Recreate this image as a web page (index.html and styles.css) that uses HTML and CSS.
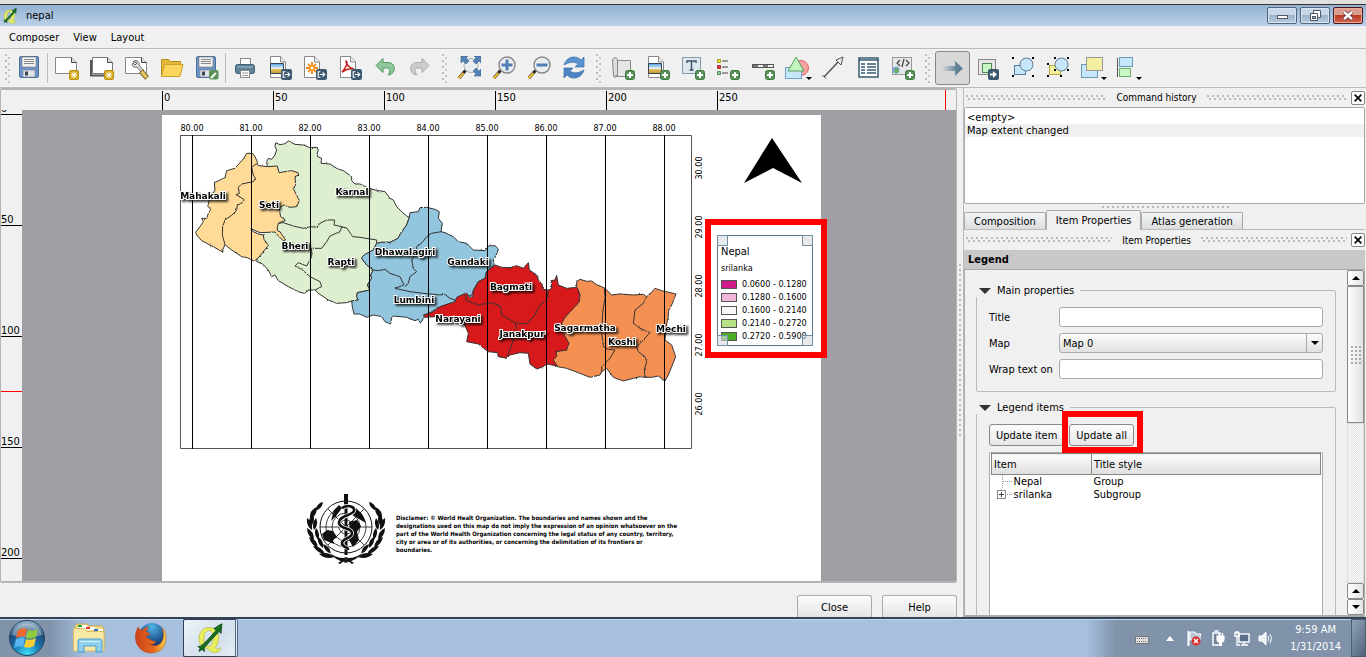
FILE: index.html
```html
<!DOCTYPE html>
<html lang="en">
<head>
<meta charset="utf-8">
<title>nepal</title>
<link rel="stylesheet" href="styles.css">
</head>
<body>
<svg class="defs" aria-hidden="true">
  <defs>
    <linearGradient id="gPhoto" x1="0" y1="0" x2="0" y2="1"><stop offset="0" stop-color="#4f9fe0"/><stop offset=".5" stop-color="#e8f3fb"/><stop offset=".55" stop-color="#e6c35a"/><stop offset="1" stop-color="#c49a36"/></linearGradient>
    <linearGradient id="gArrow" gradientUnits="userSpaceOnUse" x1="1" y1="0" x2="16" y2="0"><stop offset="0" stop-color="#5f8296" stop-opacity="0"/><stop offset="1" stop-color="#5f8296"/></linearGradient>
    <radialGradient id="gOrb" cx=".5" cy=".95" r=".9"><stop offset="0" stop-color="#3fe0f8"/><stop offset=".4" stop-color="#1a7db8"/><stop offset=".75" stop-color="#1d4a78"/><stop offset="1" stop-color="#8fb2c8"/></radialGradient>
    <radialGradient id="gFox" cx=".5" cy=".15" r=".7"><stop offset="0" stop-color="#4fb3e6"/><stop offset="1" stop-color="#123a78"/></radialGradient>
    <linearGradient id="gTail" x1="0" y1="0" x2="1" y2="0"><stop offset="0" stop-color="#c8421a"/><stop offset=".6" stop-color="#e8691e"/><stop offset="1" stop-color="#fbd24a"/></linearGradient>
    <symbol id="new" viewBox="0 0 10 10"><rect x=".5" y=".5" width="9" height="9" rx="1.5" fill="#d8ad1c" stroke="#b98f0b"/><path d="M5 1.8v6.4M1.8 5h6.4M2.7 2.7l4.6 4.6M7.3 2.7L2.7 7.3" stroke="#fff" stroke-width="1"/></symbol>
    <symbol id="add" viewBox="0 0 10 10"><rect x=".5" y=".5" width="9" height="9" rx="2" fill="#5a9158" stroke="#3f7840"/><path d="M5 2v6M2 5h6" stroke="#fff" stroke-width="2"/></symbol>
    <symbol id="exp" viewBox="0 0 10 10"><rect width="10" height="10" rx="2" fill="#3b5870"/><path d="M4 2.5H2v5h2M3.500 5h4M6 3l2 2-2 2" fill="none" stroke="#fff"/></symbol>
    <symbol id="floppy" viewBox="0 0 20 22"><rect x=".5" y=".5" width="19" height="21" rx="1.500" fill="#6e95c6" stroke="#4a6f9f"/><rect x="3" y="1" width="14" height="10" fill="#f2f2f2" stroke="#777" stroke-width=".6"/><path d="M5 3.500h10M5 5.500h10M5 7.500h10" stroke="#888"/><rect x="4" y="14" width="12" height="7" fill="#e4e4e4" stroke="#6b7e96" stroke-width=".6"/><rect x="6" y="15.500" width="3" height="4" fill="#345"/></symbol>
    <symbol id="doc" viewBox="0 0 17 22"><path d="M.5.500h10l5 5.500v15.500H.500z" fill="#fff" stroke="#888"/><path d="M10.500.500V6h5" fill="#eee" stroke="#888"/></symbol>
    <symbol id="glass" viewBox="0 0 24 24"><path d="M8.500 14.500L2 22" stroke="#222" stroke-width="3"/><path d="M6.500 17L1.500 22.500" stroke="#e9b63c" stroke-width="2.500"/><circle cx="15" cy="9" r="8" fill="#e9edf1" fill-opacity=".85" stroke="#888" stroke-width="1.400"/></symbol>
    <symbol id="grpx" viewBox="0 0 24 24"><g fill="#000"><path d="M1 1h2v2H1zM21 1h2v2h-2zM1 19h2v2H1zM21 19h2v2h-2z"/></g></symbol>
    <symbol id="q" viewBox="0 0 26 30"><path fill-rule="evenodd" d="M12 4C6 4 2 9 2 15c0 5 3 9 8 10 2 1 4 4 8 4 3 0 6-2 5-5-1 2-4 2-5 0 4-3 5-13 1-17-2-2-4-3-7-3zm0 3c4 0 4 5 4 8s-1 8-5 8-4-5-4-8 1-8 5-8z" fill="#e9ee5e" stroke="#b6bd3c" stroke-width=".8"/><path d="M2 28l1-3-2-2 3-.5L9 18 19 7l-2-2 8-5-1 10-2-2-10 11-5 5.500.5 3.500-2.500-2z" fill="#1a6f22" stroke="#0a4410" stroke-width=".8"/></symbol>
    <filter id="rough" x="-5%" y="-5%" width="110%" height="110%" color-interpolation-filters="sRGB"><feTurbulence type="fractalNoise" baseFrequency=".16" numOctaves="2" seed="4"/><feDisplacementMap in="SourceGraphic" scale="6" xChannelSelector="R" yChannelSelector="G"/></filter>
  </defs>
</svg>

<header class="titlebar">
  <svg class="app-icon" viewBox="0 0 26 30"><use href="#q"/></svg>
  <h1 class="win-title">nepal</h1>
  <div class="win-buttons">
    <button class="win-btn" aria-label="Minimize"><svg viewBox="0 0 28 15"><rect x="9.500" y="7.500" width="10" height="3" fill="#fff" stroke="#556"/></svg></button>
    <button class="win-btn" aria-label="Restore"><svg viewBox="0 0 28 15"><path d="M12.500 2.500h7v7h-7z" fill="#fff" stroke="#556"/><path d="M9.500 5.500h7v7h-7z" fill="#fff" stroke="#556"/><rect x="11.500" y="8.500" width="3" height="2" fill="#9bb" stroke="#556"/></svg></button>
    <button class="win-btn win-close" aria-label="Close window"><svg viewBox="0 0 28 15"><path d="M10 4l8 7M18 4l-8 7" stroke="#534" stroke-width="4"/><path d="M10 4l8 7M18 4l-8 7" stroke="#fff" stroke-width="2.400"/></svg></button>
  </div>
</header>

<nav class="menubar">
  <button>Composer</button><button>View</button><button>Layout</button>
</nav>

<div class="toolbar" role="toolbar">
  <i class="grip grip-first"></i>
  <button class="tool" aria-label="Save"><svg viewBox="0 0 24 24"><use href="#floppy" x="2" y="0" width="20" height="22"/></svg></button>
  <i class="sep"></i>
  <button class="tool" aria-label="New composition"><svg viewBox="0 0 24 24"><path d="M.5 1.500h16l5 5v11H.500z" fill="#fff" stroke="#888"/><path d="M16.500 1.500v5h5" fill="#ddd" stroke="#444"/><use href="#new" x="14" y="14" width="10" height="10"/></svg></button>
  <button class="tool" aria-label="Duplicate"><svg viewBox="0 0 24 24"><path d="M1 4v15.500h18" fill="none" stroke="#555" stroke-width="2"/><path d="M2.500 1.500h15l5 5v11h-20z" fill="#fff" stroke="#777"/><path d="M17.500 1.500v5h5" fill="#ddd" stroke="#444"/><use href="#new" x="14" y="14" width="10" height="10"/></svg></button>
  <button class="tool" aria-label="Composer manager"><svg viewBox="0 0 24 24"><path d="M.5 1.500h16l5 5v11H.500z" fill="#fff" stroke="#888"/><path d="M16.500 1.500v5h5" fill="#ddd" stroke="#444"/><path d="M8 6c2-3 7-1 6 3l5 6-2 2-5-6c-4 1-6-2-4-4l2 2 2-2z" fill="#ddd" stroke="#444" stroke-width=".8"/><path d="M16 15l6 7" stroke="#7a6420" stroke-width="5"/><path d="M16.500 15.500l5 6" stroke="#e8c568" stroke-width="3"/></svg></button>
  <button class="tool" aria-label="Load template"><svg viewBox="0 0 24 24"><path d="M1.500 20.500v-17h7l2 2h10v4" fill="#e3b83a" stroke="#b88f1c"/><path d="M1.500 20.500l3-12h18.500l-3 12z" fill="#fbd65c" stroke="#c9a12b"/></svg></button>
  <button class="tool" aria-label="Save template"><svg viewBox="0 0 24 24"><use href="#floppy" x="1" y="0" width="20" height="22"/><rect x="14" y="14" width="9.500" height="9.500" rx="2" fill="#5a9158"/><path d="M16 22l5-5" stroke="#fff" stroke-width="2"/></svg></button>
  <i class="sep"></i>
  <button class="tool" aria-label="Print"><svg viewBox="0 0 24 24"><rect x="7.500" y="2.500" width="10" height="7" fill="#fff" stroke="#888"/><rect x="2.500" y="8.500" width="19" height="9" rx="2" fill="#5f8196" stroke="#3f6076"/><path d="M4 11h16" stroke="#a6bac6"/><rect x="7.500" y="14.500" width="9" height="7" fill="#fff" stroke="#888"/><path d="M9 17h6M9 19.500h6" stroke="#999"/></svg></button>
  <button class="tool" aria-label="Export as image"><svg viewBox="0 0 24 24"><use href="#doc" x="2" y="0" width="17" height="22"/><path d="M2.500 7.500h13v10h-13z" fill="url(#gPhoto)" stroke="#345"/><use href="#exp" x="13" y="13" width="11" height="11"/></svg></button>
  <button class="tool" aria-label="Export as SVG"><svg viewBox="0 0 24 24"><use href="#doc" x="1" y="0" width="17" height="22"/><path d="M9 6v12M3 12h12M5 8l8 8M13 8l-8 8" stroke="#f0901e" stroke-width="2"/><circle cx="9" cy="12" r="1.500" fill="#fff"/><use href="#exp" x="13" y="13" width="11" height="11"/></svg></button>
  <button class="tool" aria-label="Export as PDF"><svg viewBox="0 0 24 24"><use href="#doc" x="2" y="0" width="17" height="22"/><path d="M8 5c2 0 1 6-4 11 3-2 7-4 12-3-5-1-8-5-8-8z" fill="none" stroke="#c8201e" stroke-width="1.600"/><use href="#exp" x="13" y="13" width="11" height="11"/></svg></button>
  <button class="tool" aria-label="Undo"><svg viewBox="0 0 24 24"><path d="M3 9.500l7-7v4h5c5 0 7 4 6 8-1 3-3 4-6 4.500 2-2 3-7-1-7h-4v4.500z" fill="#8fc79a" stroke="#4c9a5e"/></svg></button>
  <button class="tool" aria-label="Redo"><svg viewBox="0 0 24 24"><path d="M21 9.500l-7-7v4H9c-5 0-7 4-6 8 1 3 3 4 6 4.500-2-2-3-7 1-7h4v4.500z" fill="#ccc" stroke="#aaa"/></svg></button>
  <i class="grip"></i>
  <button class="tool" aria-label="Zoom full"><svg viewBox="0 0 24 24"><path d="M8.500 14.500L2 22" stroke="#222" stroke-width="3"/><path d="M6.500 17L1.500 22.500" stroke="#e9b63c" stroke-width="2.500"/><circle cx="14" cy="9.500" r="7" fill="#e9edf1" stroke="#aaa"/><g fill="#5482b4" stroke="#39618f" stroke-width=".6"><path d="M4 0h7L9 2l3 3-3 3-3-3-2 2z"/><path d="M24 0v7l-2-2-3 3-3-3 3-3-2-2z"/><path d="M24 20h-7l2-2-3-3 3-3 3 3 2-2z"/></g></svg></button>
  <button class="tool" aria-label="Zoom in"><svg viewBox="0 0 24 24"><use href="#glass"/><path d="M15 3.500v11M9.500 9h11" stroke="#4f7fb5" stroke-width="3"/></svg></button>
  <button class="tool" aria-label="Zoom out"><svg viewBox="0 0 24 24"><use href="#glass"/><path d="M9.500 9h11" stroke="#4f7fb5" stroke-width="3"/></svg></button>
  <button class="tool" aria-label="Refresh"><svg viewBox="0 0 24 24"><path d="M2 9C4 3 8 1 12 1c3 0 5 1 7 3l3-3v10H13l3-3c-4-3-9-2-14 1z" fill="#5b92cf" stroke="#356ba8" stroke-width=".7"/><path d="M22 14c-2 6-6 8-10 8-3 0-5-1-7-3l-3 3V12h9l-3 3c4 3 9 2 14-1z" fill="#4d84c4" stroke="#356ba8" stroke-width=".7"/></svg></button>
  <i class="grip"></i>
  <button class="tool" aria-label="Add map"><svg viewBox="0 0 24 24"><path d="M5.500 4.500h14v16h-15" fill="#e6e6e6" stroke="#888"/><path d="M1.500 4c0-3 5-3 5 0v15.500h-2v1.500c-1 1-2 0-2-1z" fill="#ddd" stroke="#888"/><use href="#add" x="14" y="14" width="10" height="10"/></svg></button>
  <button class="tool" aria-label="Add image"><svg viewBox="0 0 24 24"><use href="#doc" x="2" y="0" width="17" height="22"/><path d="M2.500 7.500h13v10h-13z" fill="url(#gPhoto)" stroke="#345"/><use href="#add" x="14" y="14" width="10" height="10"/></svg></button>
  <button class="tool" aria-label="Add label"><svg viewBox="0 0 24 24"><rect x="1.500" y="1.500" width="18" height="16" fill="#dfe8ef" stroke="#8a9aa6"/><path d="M6 7V5h9v2M10.500 5v9M8.500 14h4" fill="none" stroke="#3b5268" stroke-width="1.500"/><use href="#add" x="14" y="14" width="10" height="10"/></svg></button>
  <button class="tool" aria-label="Add legend"><svg viewBox="0 0 24 24"><path d="M6 5h6M6 11h6M6 17h6" stroke="#999" stroke-width="2"/><path d="M1.500 3.500h3v3h-3z" fill="#f1e62e" stroke="#a89b1a"/><path d="M1.500 9.500h3v3h-3z" fill="#e03838" stroke="#a33"/><path d="M1.500 15.500h3v3h-3z" fill="#8bc98b" stroke="#5a9158"/><use href="#add" x="14" y="14" width="10" height="10"/></svg></button>
  <button class="tool" aria-label="Add scalebar"><svg viewBox="0 0 24 24"><rect x="1.500" y="8.500" width="21" height="3" fill="#eee" stroke="#555"/><path d="M2 10h5M12 10h5" stroke="#777" stroke-width="2"/><use href="#add" x="14" y="14" width="10" height="10"/></svg></button>
  <button class="tool" aria-label="Add basic shape"><svg viewBox="0 0 28 24"><circle cx="17" cy="12" r="7.500" fill="#f7a3a3" stroke="#d66"/><rect x="1.500" y="11.500" width="16" height="11" fill="#c6e6fa" stroke="#6aa3cc"/><path d="M12 1l8 14H4z" fill="#c3f5c3" stroke="#5a9c5a"/><path d="M22 21h6l-3 3z"/></svg></button>
  <button class="tool" aria-label="Add arrow"><svg viewBox="0 0 24 24"><path d="M3 21L18 5" stroke="#555" stroke-width="1.400"/><path d="M22 1l-2 8-5-5z" fill="#eee" stroke="#555"/><path d="M1.500 19l3.500 3.500" stroke="#555"/></svg></button>
  <button class="tool" aria-label="Add attribute table"><svg viewBox="0 0 24 24"><rect x="3" y="2" width="19" height="19" fill="#fff" stroke="#355a70" stroke-width="1.500"/><path d="M3 4h19M5 8h4M11 8h9M5 11h4M11 11h9M5 14h4M11 14h9M5 17h4M11 17h9" stroke="#355a70" stroke-width="1.500"/></svg></button>
  <button class="tool" aria-label="Add HTML frame"><svg viewBox="0 0 24 24"><rect x="1.500" y="1.500" width="19" height="17" fill="#e4e8ea" stroke="#999"/><path d="M9 4L6 7l3 3M15 4l3 3-3 3M13 3l-2 8" fill="none" stroke="#444" stroke-width="1.200"/><circle cx="5" cy="14" r="3.500" fill="#78a8d8"/><path d="M3 13l4-1 1 3-3 3z" fill="#6fae5a"/><use href="#add" x="14" y="14" width="10" height="10"/></svg></button>
  <i class="grip grip-wide"></i>
  <button class="tool tool-on" aria-label="Select item"><svg viewBox="0 0 24 24"><path d="M2 10h12V5l8 7.500-8 7.500v-5H2z" fill="url(#gArrow)"/></svg></button>
  <button class="tool" aria-label="Move content"><svg viewBox="0 0 24 24"><rect x="2.500" y="3.500" width="17" height="15" fill="#e6e6e6" stroke="#888"/><rect x="6.500" y="7.500" width="9" height="9" fill="#c8f7c8" stroke="#4b8b4b"/><rect x="12" y="13" width="11" height="11" rx="2" fill="#3b5870"/><path d="M14 17.500h3v-2.500l4 3.500-4 3.500v-2.500h-3z" fill="#fff"/></svg></button>
  <button class="tool" aria-label="Group"><svg viewBox="0 0 24 24"><use href="#grpx"/><rect x="3.500" y="9.500" width="11" height="9" fill="#c6e6fa" stroke="#5d7c95"/><circle cx="15.500" cy="8.500" r="6.500" fill="#c6e6fa" stroke="#5d7c95"/></svg></button>
  <button class="tool" aria-label="Ungroup"><svg viewBox="0 0 24 24"><path d="M8 1h2v2H8zM21 1h2v2h-2zM21 13h2v2h-2zM1 7h2v2H1zM1 19h2v2H1zM14 19h2v2h-2z"/><rect x="3.500" y="9.500" width="11" height="9" fill="#f2f0a0" stroke="#b6a83c"/><circle cx="15.500" cy="8.500" r="6.500" fill="#c6e6fa" stroke="#5d7c95"/><path d="M8 13h2v2H8z"/></svg></button>
  <button class="tool" aria-label="Raise item"><svg viewBox="0 0 28 24"><rect x="2.500" y="8.500" width="16" height="13" fill="#c6e6fa" stroke="#6a9ab8"/><rect x="7.500" y="1.500" width="16" height="13" fill="#f2f0a0" stroke="#999"/><path d="M22 21h6l-3 3z"/></svg></button>
  <button class="tool" aria-label="Align items"><svg viewBox="0 0 28 24"><path d="M3.500 2v19" stroke="#555"/><rect x="5.500" y="1.500" width="13" height="9" fill="#c6e6fa" stroke="#6a9ab8"/><rect x="5.500" y="12.500" width="11" height="8" fill="#c8f7c8" stroke="#6ab06a"/><path d="M22 21h6l-3 3z"/></svg></button>
</div>

<main class="main">
  <section class="left">
    <div class="view">
      <div class="ruler-h">
        <span>0</span><span>50</span><span>100</span><span>150</span><span>200</span><span>250</span>
        <i class="mark-h"></i>
      </div>
      <div class="ruler-v">
        <span class="v-first">0</span><span>50</span><span>100</span><span>150</span><span>200</span>
        <i class="mark-v"></i>
      </div>
      <div class="canvas">
        <div class="paper">
          <svg class="map" viewBox="162 115 659 466">
            <g transform="translate(160 110) scale(.33333)" stroke="#333" stroke-width="3" stroke-linejoin="round" filter="url(#rough)">
              <path fill="#deefcf" d="M322 170L320 155 325 145 335 148 345 135 350 120 345 110 347 98 360 104 375 101 385 93 405 103 430 105 450 113 470 112 475 120 471 132 473 140 485 145 483 160 510 162 530 175 550 182 568 195 575 200 575 212 585 222 600 222 620 232 645 240 675 245 690 265 700 270 710 290 725 305 740 318 748 322 740 345 722 370 714 385 690 397 665 397 650 400 640 420 612 435 605 445 620 465 640 480 632 495 635 505 622 525 630 540 592 548 590 560 595 570 575 573 560 578 530 580 505 570 475 550 465 540 447 540 433 550 415 545 385 530 355 512 345 495 335 500 325 480 308 462 290 455 300 400 345 300 340 200z"/>
              <path fill="#ffdb97" d="M250 148L260 130 278 130 285 140 293 158 290 163 297 167 322 170 352 168 357 188 395 182 414 188 416 195 405 200 407 225 400 235 412 260 418 272 410 290 390 292 372 285 360 292 358 300 362 320 376 330 355 340 352 352 352 362 360 365 368 378 377 390 370 392 355 378 345 366 300 368 272 356 280 365 295 372 310 375 312 388 325 406 300 438 283 454 262 443 245 440 215 420 195 404 188 420 189 427 160 410 140 400 125 392 110 375 107 367 120 350 130 335 125 325 140 325 145 310 152 298 143 288 148 270 165 240 163 218 195 203 200 182 225 175 245 152z"/>
              <path fill="none" d="M293 158L275 172 280 195 286 205 280 215 245 222 235 232 238 250 228 254 252 268 245 280 232 285 230 300 220 312 195 330 188 350 187 375 195 404M355 340L370 338 400 348 430 355 452 350 470 352 480 340 500 330 524 330 522 345 545 350 560 354 578 380 600 382 650 390 650 400M545 350L540 365 510 378 500 395 485 415 455 415 455 440 440 468 425 462 415 458 405 468 425 478 450 500 480 515 485 530 465 540"/>
              <path fill="#92c5de" d="M748 322L750 308 775 305 780 293 800 292 825 298 838 305 835 325 847 340 843 365 855 368 880 380 895 395 920 400 940 420 975 422 985 408 1005 407 1015 417 1008 438 1000 450 1002 465 995 472 980 485 975 505 955 515 940 540 935 558 910 555 885 575 830 595 800 615 790 625 782 640 775 628 765 632 740 622 700 618 695 622 692 642 675 635 665 620 640 615 620 622 600 612 582 612 577 590 575 573 595 570 590 560 592 548 630 540 622 525 635 505 632 495 640 480 620 465 605 445 612 435 640 420 650 400 665 397 690 397 714 385 722 370 740 345z"/>
              <path fill="none" d="M843 365L815 370 800 380 785 400 770 410 770 430 755 450 760 475 770 485 750 500 745 520 735 530M640 480L655 482 675 478 690 490 720 500 732 525 705 535 750 545 790 550 840 555 855 553 870 565 885 570"/>
            </g>
            <g transform="translate(420 180) scale(.33333)" stroke="#333" stroke-width="3" stroke-linejoin="round" filter="url(#rough)">
              <path fill="#f59053" d="M470 322L470 305 480 298 500 304 515 303 530 314 545 320 555 325 575 345 600 342 640 345 670 343 680 350 692 340 705 325 725 332 768 342 755 375 745 395 745 410 738 440 735 480 755 495 767 530 755 560 745 585 735 603 715 588 695 592 675 592 660 590 640 595 610 603 580 592 560 565 545 575 540 585 510 592 480 580 440 565 412 560 395 540 380 460 440 360z"/>
              <path fill="none" d="M553 325L555 350 548 400 545 460 550 500 565 508 585 510 570 535 545 560 545 577M680 350L670 370 645 390 640 430 660 445 690 458 665 485 650 500 655 515 675 530 680 545 673 570 675 592"/>
              <path fill="#d7191c" d="M10 405L40 395 60 380 105 365 110 352 140 338 145 350 158 352 160 332 175 305 195 295 200 275 215 262 225 255 245 262 270 263 290 257 310 265 325 248 328 270 350 285 355 300 365 310 370 328 385 330 395 325 393 302 405 300 410 287 415 315 440 325 470 322 475 330 480 345 478 365 460 385 435 412 425 430 430 460 447 490 443 500 440 510 408 515 410 530 400 540 412 558 380 552 370 560 350 567 330 552 325 520 300 518 270 525 260 535 235 530 232 518 205 515 175 492 140 485 145 460 130 425 105 420 45 410 15 412z"/>
              <path fill="none" d="M135 345L140 362 175 375 215 368 240 378 245 405 285 428 320 432 345 405 360 375 380 360 385 330M285 428L290 445 270 465 280 480 260 535"/>
            </g>
            <path class="frame" d="M180 135.500H691.500V448.500H180.500V135.500"/>
            <path class="grid" d="M192.500 135V449M251.500 135V449M310.500 135V449M369.500 135V449M428.500 135V449M487.500 135V449M546.500 135V449M605.500 135V449M664.500 135V449"/>
            <g class="ticks">
              <text x="192" y="131">80.00</text><text x="251" y="131">81.00</text><text x="310" y="131">82.00</text><text x="369" y="131">83.00</text><text x="428" y="131">84.00</text><text x="487" y="131">85.00</text><text x="546" y="131">86.00</text><text x="605" y="131">87.00</text><text x="664" y="131">88.00</text>
              <text transform="translate(702 168) rotate(-90)">30.00</text><text transform="translate(702 227) rotate(-90)">29.00</text><text transform="translate(702 286) rotate(-90)">28.00</text><text transform="translate(702 345) rotate(-90)">27.00</text><text transform="translate(702 404) rotate(-90)">26.00</text>
            </g>
            <g class="names">
              <text x="203" y="199">Mahakali</text><text x="269" y="208">Seti</text><text x="352" y="195">Karnal</text><text x="295" y="249">Bheri</text><text x="341" y="265">Rapti</text><text x="405" y="255">Dhawalagiri</text><text x="468" y="265">Gandaki</text><text x="414" y="303">Lumbini</text><text x="511" y="290">Bagmati</text><text x="458" y="322">Narayani</text><text x="522" y="337">Janakpur</text><text x="585" y="331">Sagarmatha</text><text x="622" y="345">Koshi</text><text x="671" y="332">Mechi</text>
            </g>
            <path d="M772 138L802 183 773 168 744 183z"/>
            <g transform="translate(346 528)">
              <g fill="none" stroke="#111"><circle r="26" cx="0" cy="-1"/><circle r="20" cy="-1" stroke-width=".8"/><circle r="14" cy="-1" stroke-width=".8"/><circle r="7" cy="-1" stroke-width=".8"/><path d="M-26-1H26M-18-19L18 17M18-19L-18 17" stroke-width=".8"/></g>
              <path d="M-24 6l5-4 6 1 4 6-4 3 1 4-5-2-5-2zM3-6l8-2 4 6-4 6 2 8-6 7-4-7 1-8zM10-20l6 6 4 9-7-4-6-4zM-12-18l5-5 3 3-6 8-5 5z" fill="#111"/>
              <path d="M0-34V27" stroke="#111" stroke-width="3"/><path d="M0-34V-24" stroke="#111" stroke-width="4"/>
              <path d="M-4-20c7-4 13-1 12 3s-16 5-15 12 13 4 13 10-10 5-10 10 6 3 6 7" fill="none" stroke="#fff" stroke-width="4"/>
              <path d="M-4-20c7-4 13-1 12 3s-16 5-15 12 13 4 13 10-10 5-10 10 6 3 6 7" fill="none" stroke="#111" stroke-width="2.600"/>
              <g id="laurel" fill="#111"><path d="M-23-26q-6 1-8 9 7-2 8-9zM-29-21q-8 3-7 12 7-3 7-12zM-33-14q-6 5-3 13 6-5 3-13zM-39-10q-1 8 5 12 1-8-5-12zM-30-10q-5 5-2 12 5-5 2-12zM-39 0q0 8 7 12 0-9-7-12zM-30 0q-3 6 2 12 3-7-2-12zM-37 9q2 8 9 11-1-9-9-11zM-28 9q-1 7 5 11 1-8-5-11zM-33 18q4 7 12 8-4-8-12-8zM-23 16q1 7 8 10-1-8-8-10zM-27 26q7 6 15 3-6-6-15-3zM-17 24q6 6 15 6l4 5-3-1q-9-1-16-10zM-8 35l9-6 1 1-8 6z"/></g>
              <use href="#laurel" transform="scale(-1 1)"/>
            </g>
          </svg>
          <p class="disclaimer">Disclamer: © World Healt Organization. The boundaries and names shown and the<br>designations used on this map do not imply the expression of an opinion whatsoever on the<br>part of the World Health Organization concerning the legal status of any country, territory,<br>city or area or of its authorities, or concerning the delimitation of its frontiers or<br>boundaries.</p>
          <div class="legend-mark">
            <div class="legend">
              <div class="lg-title">Nepal</div>
              <div class="lg-sub">srilanka</div>
              <ul>
                <li><i class="c1"></i>0.0600 - 0.1280</li>
                <li><i class="c2"></i>0.1280 - 0.1600</li>
                <li><i class="c3"></i>0.1600 - 0.2140</li>
                <li><i class="c4"></i>0.2140 - 0.2720</li>
                <li><i class="c5"></i>0.2720 - 0.5900</li>
              </ul>
              <b class="handle tl"></b><b class="handle tr"></b><b class="handle bl"></b><b class="handle br"></b>
            </div>
          </div>
        </div>
      </div>
    </div>
    <div class="footer"><button class="push">Close</button><button class="push">Help</button></div>
  </section>

  <div class="split"></div>

  <aside class="dock">
    <div class="dock-title"><i></i><span>Command history</span><i></i><button class="x" aria-label="Close command history"><svg viewBox="0 0 12 12"><path d="M2 2l8 8M10 2l-8 8" stroke="#000" stroke-width="2"/></svg></button></div>
    <ul class="history"><li>&lt;empty&gt;</li><li class="sel">Map extent changed</li></ul>
    <div class="split-h"><i></i></div>
    <div class="tabs" role="tablist"><button role="tab">Composition</button><button role="tab" class="tab-on">Item Properties</button><button role="tab">Atlas generation</button></div>
    <div class="dock-title"><i></i><span>Item Properties</span><i></i><button class="x" aria-label="Close item properties"><svg viewBox="0 0 12 12"><path d="M2 2l8 8M10 2l-8 8" stroke="#000" stroke-width="2"/></svg></button></div>
    <h2 class="section">Legend</h2>
    <div class="scroll">
      <div class="content">
        <fieldset>
          <legend><i class="tri"></i>Main properties</legend>
          <div class="form">
            <label for="title">Title</label><input id="title" type="text">
            <label for="mapsel">Map</label><div class="select"><select id="mapsel"><option>Map 0</option></select></div>
            <label for="wrap">Wrap text on</label><input id="wrap" type="text">
          </div>
        </fieldset>
        <fieldset class="items">
          <legend><i class="tri"></i>Legend items</legend>
          <div class="btns"><button class="small">Update item</button><div class="marked"><button class="small">Update all</button></div></div>
          <div class="tree">
            <table>
              <thead><tr><th>Item</th><th>Title style</th></tr></thead>
              <tbody><tr><td><svg class="node" viewBox="0 0 17 13"><path d="M6.500 0V13M7 6.500h10" stroke="#999" stroke-dasharray="1 1"/></svg>Nepal</td><td>Group</td></tr>
              <tr><td><svg class="node" viewBox="0 0 17 13"><path d="M11 6.500h6" stroke="#999" stroke-dasharray="1 1"/><rect x="1.500" y="2.500" width="8" height="8" fill="#fff" stroke="#888"/><path d="M3 6.500h5M5.500 4v5" stroke="#444"/></svg>srilanka</td><td>Subgroup</td></tr></tbody>
            </table>
          </div>
        </fieldset>
      </div>
      <div class="bar">
        <button aria-label="Scroll up"><svg viewBox="0 0 8 4"><path d="M4 0l4 4H0z"/></svg></button>
        <div class="thumb"><i></i></div>
        <div class="track"></div>
        <button aria-label="Page up"><svg viewBox="0 0 8 4"><path d="M4 0l4 4H0z"/></svg></button>
        <button aria-label="Scroll down"><svg viewBox="0 0 8 4"><path d="M4 4l4-4H0z"/></svg></button>
      </div>
    </div>
  </aside>
</main>

<footer class="taskbar">
  <button class="task" aria-label="Start"><svg class="orb" viewBox="0 0 38 38"><circle cx="19" cy="19" r="17.500" fill="url(#gOrb)" stroke="#24425e"/><path d="M4 16a15.500 15.500 0 0130 0q-14 5-30 0z" fill="#fff" opacity=".35"/><path d="M10 11q5-3 9-1l-2 8q-4-2-9 1z" fill="#ee6a2c"/><path d="M20 11q5 2 10-1l-2 8q-5 3-10 1z" fill="#8fcb3a"/><path d="M8 20q5-3 9-1l-2 9q-4-2-9 1z" fill="#5ab4ee"/><path d="M18 20q5 2 10-1l-2 8q-5 3-10 1z" fill="#fbcf3a"/></svg></button>
  <button class="task" aria-label="Explorer"><svg class="fold" viewBox="0 0 34 32"><path d="M3 4l2-2h10l2 2h13l2 3v21H3z" fill="#f3dd8c" stroke="#c9a94e"/><path d="M6 3h9v4H6z" fill="#fff"/><path d="M6 3h4v2H6z" fill="#2ca02c"/><path d="M14 5h9v3h-9z" fill="#fff"/><path d="M14 5h4v2h-4z" fill="#d33"/><path d="M22 7h9v3h-9z" fill="#fff"/><path d="M22 7h4v2h-4z" fill="#27c"/><path d="M1.500 6.500h11l2 3h17.500v19.500H1.500z" fill="#f9e9a6" stroke="#d8bc66"/><path d="M6 30V19q0-2 2-2h20q2 0 2 2v11h-6v-6H12v6z" fill="#8fd0ee" stroke="#4d9cc8"/><path d="M8 19.500h20" stroke="#d8f2fc"/></svg></button>
  <button class="task" aria-label="Firefox"><svg class="fox" viewBox="0 0 32 32"><circle cx="17" cy="14" r="13" fill="url(#gFox)"/><path d="M3 5Q-1 12 1 20C4 28 10 31 16 31c9 0 15-6 15-15 0-5-1-8-4-10 2 5 2 9 0 13-2 5-9 6-13 3 3 1 6 0 7-3-2 1-3 0-5-1-3-2-5-2-5-4 0-1 2-1 4-1 0-2-2-3-4-3 0-2 1-3 3-5-3 0-5 1-6 3H6Q4 7 3 5z" fill="url(#gTail)" stroke="#b8431a" stroke-width=".5"/></svg></button>
  <button class="task task-on" aria-label="QGIS"><svg class="qg" viewBox="0 0 26 30"><use href="#q"/></svg></button>
  <div class="tray">
    <svg class="t-kb" viewBox="0 0 16 16"><path d="M3 4q4-4 6-2t4-1" fill="none" stroke="#999"/><rect x="1.500" y="6.500" width="13" height="7" fill="#ddd" stroke="#777"/><path d="M3 8.500h10M3 11.500h10" stroke="#777" stroke-dasharray="1 1"/></svg>
    <svg class="t-up" viewBox="0 0 8 5"><path d="M4 0l4 5H0z" fill="#fff"/></svg>
    <svg viewBox="0 0 16 16"><path d="M2.500 1v15" stroke="#fff" stroke-width="2"/><path d="M4 2h5l1 2h5l-1 3v3H4z" fill="#b8c6d8" stroke="#fff"/><circle cx="10" cy="11" r="4.500" fill="#d9302c"/><path d="M8 9l4 4M12 9l-4 4" stroke="#fff" stroke-width="1.500"/></svg>
    <svg viewBox="0 0 16 16"><path d="M3 3h7v12H3zM4.500 1h4" fill="#71849d" stroke="#fff" stroke-width="1.500"/><path d="M7 6h7v3q0 3-2.500 3v4h-2v-4Q7 12 7 9zM9 3v3M12.500 3v3" fill="#fff" stroke="#fff" stroke-width="1.200"/></svg>
    <svg viewBox="0 0 16 16"><rect x="5" y="4" width="10" height="8" fill="#5b6f8a" stroke="#fff" stroke-width="1.400"/><path d="M7 15h7M10 12v3M3 6v9h3M1 3h4v3H1zM2 1v2M4 1v2" fill="none" stroke="#fff" stroke-width="1.300"/></svg>
    <svg viewBox="0 0 16 16"><path d="M1 6h3l4-4v13l-4-4H1z" fill="#eef2f7" stroke="#fff"/><path d="M10 6q1.500 2.500 0 5M12 4q3 4.500 0 9" fill="none" stroke="#fff"/></svg>
    <div class="clock"><time>9:59 AM</time><time>1/31/2014</time></div>
    <button class="desk" aria-label="Show desktop"></button>
  </div>
</footer>
</body>
</html>
```
FILE: styles.css
```css
* { box-sizing: border-box; }
html, body { height: 100%; }
body {
  margin: 0;
  display: flex;
  flex-direction: column;
  overflow: hidden;
  background: #f0f0f0;
  border-top: 4px solid #e0e0de;
  color: #000;
  font: 11px/13px "DejaVu Sans Condensed", "DejaVu Sans", sans-serif;
}
button, input, select { font: inherit; color: inherit; margin: 0; }
button { padding: 0; border: 0; background: none; }
ul { list-style: none; margin: 0; padding: 0; }
h1, h2, p { margin: 0; font: inherit; }
svg { display: block; }
.defs { position: absolute; width: 0; height: 0; }

.titlebar {
  flex: none;
  display: flex;
  align-items: center;
  height: 22px;
  padding: 0 3px;
  border-top: 1px solid #333;
  background: linear-gradient(#94b1d0, #bad1ea);
}
.app-icon { width: 14px; height: 16px; }
.win-title { flex: 1; padding-left: 9px; }
.win-buttons { display: flex; gap: 3px; }
.win-btn {
  width: 30px; height: 17px;
  border: 1px solid #52657d;
  border-radius: 2px;
  background: linear-gradient(#c9d8e8 45%, #9db4cc 50%, #b4cbe2);
  box-shadow: inset 0 0 0 1px #d9e5f1;
}
.win-btn svg { width: 28px; height: 15px; }
.win-close { background: linear-gradient(#dd9d8c 45%, #bb3a22 50%, #d0684c); border-color: #4c1a1a; box-shadow: inset 0 0 0 1px #e6aa9b; }

.menubar { flex: none; display: flex; gap: 14px; height: 23px; padding: 1px 9px 0; border-bottom: 1px solid #b9b9b9; }

.toolbar { flex: none; display: flex; align-items: center; height: 39px; border-bottom: 1px solid #bbb; }
.tool { flex: none; display: grid; place-items: center; width: 35px; height: 34px; }
.tool svg { height: 24px; width: auto; }
.tool-on { border: 1px solid #888; border-radius: 3px; background: #d8d8d8; }
.sep { width: 1px; height: 30px; margin: 0 1px; background: #bbb; }
.grip {
  width: 6px; height: 29px; margin: 0 3px 0 5px;
  background:
    linear-gradient(#c2c2c2, #c2c2c2) 0 0 / 2px 2px,
    radial-gradient(circle at 1px 1px, #bbb 1px, transparent 1px) 0 0 / 6px 6px,
    radial-gradient(circle at 4px 4px, #c6c6c6 1px, transparent 1px) 0 0 / 6px 6px;
  background-repeat: no-repeat, repeat, repeat;
}
.grip-first { margin-right: 0; }
.grip-wide { margin-right: 4px; }

.main { flex: 1; min-height: 0; display: grid; grid-template: minmax(0, 1fr) / minmax(0, 1fr) 6px 403px; }
.left { display: flex; flex-direction: column; min-height: 0; }
.view {
  flex: 1; min-height: 0;
  display: grid;
  grid-template: 20px minmax(0, 1fr) / 21px minmax(0, 1fr);
  border: 1px solid #b4b4b4;
  border-top-width: 2px;
  border-bottom-width: 2px;
  border-radius: 2px;
}
.ruler-h { grid-column: 1 / 3; display: flex; padding: 1px 0 0 161px; position: relative; overflow: hidden; }
.ruler-h span { flex: 0 0 111px; border-left: 1px solid #000; padding-left: 1px; }
.mark-h { position: absolute; right: 10px; top: 0; bottom: 0; width: 1px; background: red; }
.ruler-v { display: flex; flex-direction: column; position: relative; overflow: hidden; }
.ruler-v span { flex: 0 0 111px; display: flex; align-items: flex-end; border-bottom: 1px solid #000; line-height: 11px; overflow: hidden; }
.ruler-v .v-first { flex-basis: 5px; }
.mark-v { position: absolute; left: 0; right: 0; top: 281px; height: 1px; background: red; }
.canvas { position: relative; overflow: hidden; background: #a09fa4; }
.paper { position: absolute; left: 140px; top: 5px; width: 659px; height: 466px; background: #fff; }
.map { width: 100%; height: 100%; }
.frame { fill: none; stroke: #555; }
.grid { stroke: #000; }
.ticks { font-size: 9px; text-anchor: middle; }
.names { font: bold 9px "DejaVu Sans", sans-serif; text-anchor: middle; paint-order: stroke; stroke: #fff; stroke-width: 2px; filter: drop-shadow(2px 2px 1px rgba(0,0,0,.75)); }
.disclaimer { position: absolute; left: 234px; top: 399px; font: bold 6px/8px "DejaVu Sans Condensed", sans-serif; white-space: nowrap; }
.legend-mark { position: absolute; left: 543px; top: 104px; width: 122px; padding: 10px 8px 6px 6px; border: 6px solid red; }
.legend { position: relative; height: 111px; padding: 9px 3px 0; border: 1px solid #5b7080; font-size: 9px; }
.lg-title { font-size: 11px; padding-bottom: 4px; }
.lg-sub { padding-bottom: 3px; }
.legend li { display: flex; align-items: center; white-space: nowrap; margin-bottom: 1px; line-height: 12px; }
.legend li i { width: 16px; height: 9px; margin-right: 5px; border: 1px solid #555; }
.c1 { background: #d01c8b; } .c2 { background: #f1b6da; } .c3 { background: #f7f7f7; } .c4 { background: #b8e186; } .c5 { background: #4dac26; }
.handle { position: absolute; width: 11px; height: 11px; border: 1px solid #6f8fa5; background: rgba(215,218,225,.6); }
.tl { left: -1px; top: -1px; } .tr { right: -1px; top: -1px; } .bl { left: -1px; bottom: -1px; } .br { right: -1px; bottom: -1px; }

.footer { flex: none; display: flex; justify-content: flex-end; gap: 10px; padding: 12px 0 0; height: 34px; }
.push { width: 75px; height: 23px; border: 1px solid #aaa; border-bottom: 0; border-radius: 3px 3px 0 0; background: linear-gradient(#fdfdfd, #e3e3e3); }
.split { margin: 175px 0 178px; background: radial-gradient(circle at 3px 2px, #bdbdbd 1px, transparent 1px) 0 0 / 6px 5px; }

.dock { display: flex; flex-direction: column; min-width: 0; padding: 1px 1px 0 0; border-left: 1px solid #bbb; }
.dock-title { flex: none; display: flex; align-items: center; height: 17px; gap: 10px; padding-left: 2px; font-size: 10px; }
.dock-title i { flex: 1; height: 6px; background: radial-gradient(circle at 1px 1px, #bbb 1px, transparent 1px) 0 0 / 5px 6px, radial-gradient(circle at 3px 4px, #bbb 1px, transparent 1px) 0 0 / 5px 6px; }
.dock-title i:nth-of-type(2) { margin-right: -6px; }
.x { display: grid; place-items: center; width: 14px; height: 14px; border: 1px solid #888; border-radius: 2px; background: #fff; }
.x svg { width: 10px; height: 10px; }
.history { flex: none; height: 97px; margin-top: 1px; padding: 3px 0; border: 1px solid #aaa; border-radius: 2px; background: #fff; }
.history li { padding: 0 2px; }
.sel { background: #f0f0f0; }
.split-h { flex: none; height: 6px; display: flex; justify-content: center; align-items: center; }
.split-h i { width: 128px; height: 3px; background: radial-gradient(circle at 2px 1px, #b8b8b8 1px, transparent 1px) 0 0 / 5px 3px; }
.tabs { flex: none; display: flex; align-items: flex-end; height: 20px; border-bottom: 1px solid #bbb; }
.tabs button { height: 17px; padding: 0 9px; border: 1px solid #aaa; border-bottom: 0; border-radius: 2px 2px 0 0; background: linear-gradient(#f2f6fa, #ddd); }
.tabs .tab-on { height: 20px; margin-bottom: -1px; background: #f0f0f0; }
.tabs + .dock-title { height: 20px; }
.section { flex: none; height: 19px; padding: 3px 4px; background: #c8c8c8; font-weight: bold; }
.scroll { flex: 1; min-height: 0; display: flex; justify-content: space-between; border: 1px solid #aaa; border-bottom-width: 2px; }
.content { flex: 1; padding: 14px 11px 0 11px; overflow: hidden; min-height: 0; display: flex; flex-direction: column; }
fieldset { flex: none; min-width: 0; margin: 0 0 9px; padding: 10px 12px 12px; border: 1px solid #bbb; border-radius: 2px; }
fieldset.items { flex: 1 0 240px; padding: 10px 12px 0; margin: 0; }
legend { display: flex; align-items: center; gap: 6px; margin-left: -13px; padding: 0 6px 0 3px; }
.tri { border: 6px solid transparent; border-top: 6px solid #333; border-bottom: 0; }
.form { display: grid; grid-template-columns: 70px 1fr; row-gap: 6px; align-items: center; }
.form input, .select { width: 100%; height: 20px; border: 1px solid #aaa; border-radius: 3px; background: #fff; }
.select { position: relative; background: linear-gradient(#fdfdfd, #e0e0e0); }
.select::before { content: ""; position: absolute; right: 15px; top: 0; bottom: 0; border-left: 1px solid #aaa; }
.select::after { content: ""; position: absolute; right: 3px; top: 7px; border: 4px solid transparent; border-top-color: #000; border-bottom: 0; }
.select select { appearance: none; width: 100%; height: 18px; padding: 0 3px; border: 0; background: none; }
.btns { display: flex; }
.small { height: 22px; border: 1px solid #888; border-radius: 3px; padding: 0 6px; background: linear-gradient(#fdfdfd, #e6e6e6); white-space: nowrap; }
.marked { position: relative; margin: -13px 0 -1px -2px; padding: 7px 3px 1px 1px; border: 6px solid red; }
.tree { height: 200px; border: 1px solid #aaa; border-radius: 2px; background: #fff; padding: 0 1px; }
table { width: 100%; border-collapse: collapse; table-layout: fixed; }
th { height: 21px; padding: 0 2px; text-align: left; font-weight: normal; border: 1px solid #888; background: linear-gradient(#fdfdfd, #dedede); }
th:first-child { width: 100px; }
td { padding: 0 2px; height: 13px; }
td:first-child { display: flex; padding-left: 4px; }
.node { width: 17px; height: 13px; margin-right: 1px; }
.bar { flex: none; width: 17px; display: flex; flex-direction: column; }
.bar button { flex: none; display: grid; place-items: center; height: 16px; border: 1px solid #888; border-radius: 2px; background: linear-gradient(90deg, #fff, #e4e4e4); }
.bar svg { width: 8px; height: 4px; }
.thumb { flex: 0 0 137px; display: grid; place-items: center; border: 1px solid #888; background: linear-gradient(90deg, #fdfdfd, #e2e2e2); }
.thumb i { width: 12px; height: 20px; background: radial-gradient(circle at 2px 2px, #aaa 1px, transparent 1px) 0 0 / 4px 4px; }
.track { flex: 1; background: repeating-conic-gradient(#e4e4e4 0 25%, #fafafa 0 50%) 0 0 / 2px 2px; border: 1px solid #ddd; }

.taskbar {
  flex: none; display: flex; height: 40px;
  border-top: 2px solid #33435a;
  background: linear-gradient(90deg, #8093ab 50px, #a6c0de 85px, #a6c0de calc(100% - 280px), #8093ab calc(100% - 250px));
  box-shadow: inset 0 1px #c4d6ea;
}
.task { display: grid; place-items: center; width: 61px; }
.task:first-child { width: 54px; }
.task:nth-child(2) { width: 70px; }
.task:nth-child(3) { width: 54px; }
.orb { width: 38px; height: 38px; }
.fold { width: 34px; height: 32px; }
.fox { width: 32px; height: 32px; }
.qg { width: 26px; height: 31px; }
.task-on { width: 55px; margin-left: 5px; border: 1px solid #333f50; border-right: 3px double #55677e; border-radius: 2px; background: linear-gradient(135deg, #eef3f9, #d3dfec 60%, #e4ecf5); }
.tray { margin-left: auto; display: flex; align-items: center; gap: 8px; color: #fff; }
.tray svg { width: 16px; height: 16px; }
.tray .t-kb { margin-right: 8px; }
.tray .t-up { width: 8px; height: 5px; margin-right: 4px; }
.clock { display: flex; flex-direction: column; align-items: center; padding: 0 2px 0 8px; line-height: 17px; }
.desk { align-self: stretch; width: 15px; border: 1px solid #4c5d74; background: linear-gradient(120deg, #8fa2b8, #53657d); }
```
